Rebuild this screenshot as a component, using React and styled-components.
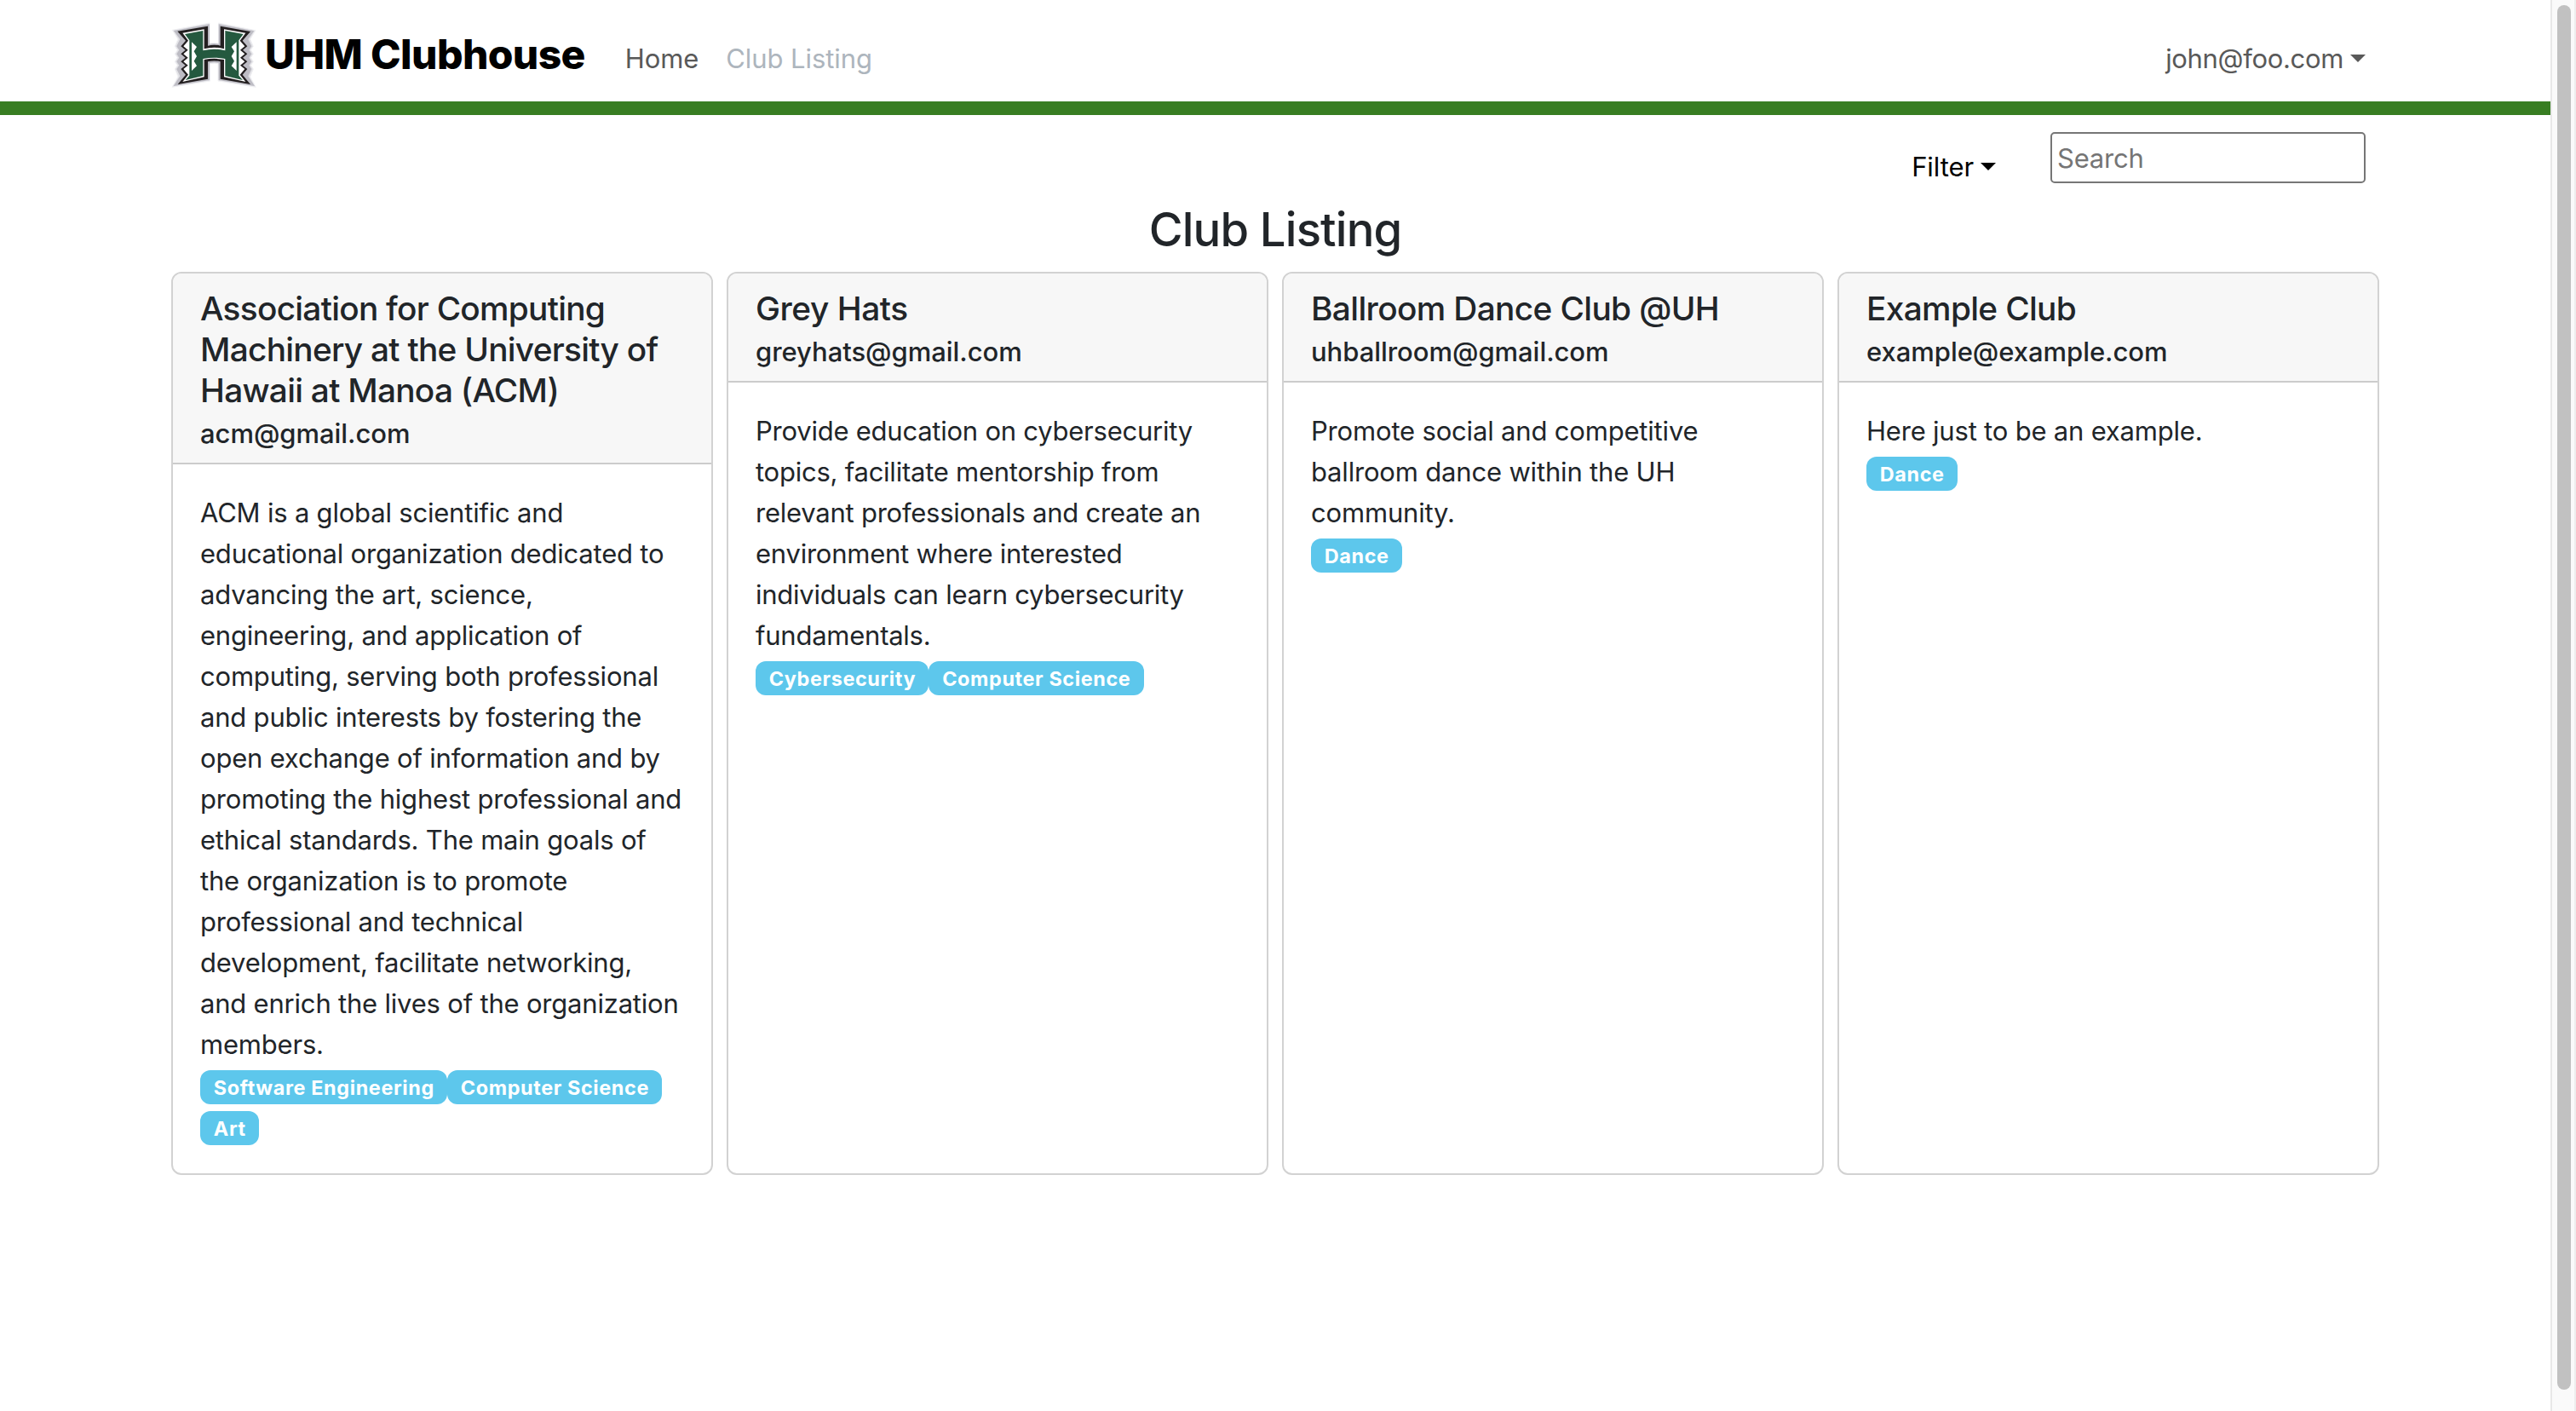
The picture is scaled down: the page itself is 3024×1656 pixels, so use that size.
import React from "react";
import styled, { createGlobalStyle } from "styled-components";

const GlobalStyle = createGlobalStyle`
  * { box-sizing: border-box; }
  body {
    margin: 0;
    overflow: hidden;
    background: #fff;
    color: #212529;
    font-family: Inter, "Liberation Sans", sans-serif;
    font-size: 31px;
    line-height: 48px;
    letter-spacing: -0.2px;
  }
`;

const Window = styled.div`
  display: flex;
  height: 1656px;
`;

const Page = styled.div`
  flex: 1;
  min-width: 0;
`;

const NavBar = styled.header`
  display: flex;
  align-items: flex-start;
  height: 135px;
  padding: 0 217px 0 201px;
  border-bottom: 16px solid #387d22;
`;

const Brand = styled.a`
  display: flex;
  align-items: flex-start;
  gap: 10px;
  padding-top: 26px;
  color: #000;
`;

const Logo = styled.svg`
  width: 100px;
  height: 77px;
`;

const BrandName = styled.span`
  padding-top: 14px;
  font-size: 48px;
  font-weight: 800;
  letter-spacing: -0.64px;
`;

const NavLinks = styled.nav`
  display: flex;
  gap: 32px;
  padding: 45px 0 0 47px;
`;

const NavLink = styled.a`
  color: ${(p) => (p.$active ? "#adb5bd" : "#595959")};
  letter-spacing: -0.08px;
`;

const Dropdown = styled.button`
  display: flex;
  align-items: center;
  gap: 8px;
  margin: ${(p) => p.$top}px 0 0;
  padding: 0;
  border: 0;
  background: none;
  color: ${(p) => p.$color};
  font: inherit;
  line-height: 48px;
  letter-spacing: ${(p) => p.$tracking}px;
`;

const AccountMenu = styled(Dropdown)`
  margin-left: auto;
`;

const Caret = styled.span`
  border-top: 9.6px solid currentColor;
  border-left: 9.6px solid transparent;
  border-right: 9.6px solid transparent;
`;

const Toolbar = styled.div`
  display: flex;
  justify-content: flex-end;
  align-items: flex-start;
  gap: 64px;
  height: 101px;
  padding: 20px 217px 0 0;
`;

const SearchBox = styled.input`
  width: 370px;
  height: 60px;
  padding: 2px 6px;
  border: 2px solid #767676;
  border-radius: 5px;
  background: #fff;
  font: inherit;
  letter-spacing: -0.2px;
  &::placeholder { color: #757575; opacity: 1; }
`;

const PageTitle = styled.h1`
  margin: 0 0 16px;
  font-size: 54.4px;
  font-weight: 500;
  line-height: 67px;
  letter-spacing: -0.84px;
  text-align: center;
`;

const CardGrid = styled.main`
  display: grid;
  grid-template-columns: repeat(4, 636px);
  gap: 16px;
  height: 1060px;
  padding-left: 201px;
`;

const Card = styled.article`
  border: 2px solid #d2d2d2;
  border-radius: 12px;
  overflow: hidden;
`;

const CardHeader = styled.div`
  padding: 17px 32px 15px;
  border-bottom: 2px solid #ccc;
  background: #f7f7f7;
`;

const ClubName = styled.h2`
  margin: 0;
  font-size: 38.8px;
  font-weight: 500;
  line-height: 48px;
  letter-spacing: ${(p) => p.$tracking}px;
`;

const ClubEmail = styled.div`
  padding-top: 7px;
  font-weight: 500;
  line-height: 39px;
  letter-spacing: -0.04px;
`;

const CardBody = styled.div`
  padding: 33px 32px 32px;
`;

const Description = styled.p`
  margin: 0;
  letter-spacing: ${(p) => p.$tracking}px;
`;

const DescriptionLine = styled.span`
  display: block;
  white-space: nowrap;
`;

const Badges = styled.div`
  display: flex;
  flex-wrap: wrap;
`;

const Badge = styled.span`
  height: 40px;
  margin: 6px 0 2px;
  padding: 0 15.2px 0 15.8px;
  border-radius: 12px;
  background: #5dc7ec;
  color: #fff;
  font-size: 23.4px;
  font-weight: 700;
  line-height: 41px;
  letter-spacing: 0.62px;
`;

const ScrollTrack = styled.div`
  flex: none;
  width: 30px;
  padding: 6px 0 0 6px;
  border-left: 2px solid #e8e8e8;
  border-right: 2px solid #ededed;
  background: #fafafa;
`;

const ScrollThumb = styled.div`
  width: 16px;
  height: 1625px;
  border-radius: 8px;
  background: #c1c1c1;
`;

const clubs = [
  {
    name: "Association for Computing Machinery at the University of Hawaii at Manoa (ACM)",
    nameTracking: -0.73,
    email: "acm@gmail.com",
    tracking: -0.2,
    lines: [
      "ACM is a global scientific and",
      "educational organization dedicated to",
      "advancing the art, science,",
      "engineering, and application of",
      "computing, serving both professional",
      "and public interests by fostering the",
      "open exchange of information and by",
      "promoting the highest professional and",
      "ethical standards. The main goals of",
      "the organization is to promote",
      "professional and technical",
      "development, facilitate networking,",
      "and enrich the lives of the organization",
      "members.",
    ],
    interests: ["Software Engineering", "Computer Science", "Art"],
  },
  {
    name: "Grey Hats",
    nameTracking: -0.45,
    email: "greyhats@gmail.com",
    tracking: -0.24,
    lines: [
      "Provide education on cybersecurity",
      "topics, facilitate mentorship from",
      "relevant professionals and create an",
      "environment where interested",
      "individuals can learn cybersecurity",
      "fundamentals.",
    ],
    interests: ["Cybersecurity", "Computer Science"],
  },
  {
    name: "Ballroom Dance Club @UH",
    nameTracking: -0.63,
    email: "uhballroom@gmail.com",
    tracking: -0.18,
    lines: ["Promote social and competitive", "ballroom dance within the UH", "community."],
    interests: ["Dance"],
  },
  {
    name: "Example Club",
    nameTracking: -0.65,
    email: "example@example.com",
    tracking: -0.2,
    lines: ["Here just to be an example."],
    interests: ["Dance"],
  },
];

function ClubLogo() {
  return (
    <Logo viewBox="33 48 300 231" aria-hidden="true">
      <path
        d="M37 76 L168 51 V123 Q184 120 200 123 V51 L330 77 L311 108 L322 133 L313 146 L322 160 L313 173 L322 187 L313 200 L322 213 L311 240 L331 277 L198 255 V194 Q184 191 170 194 V255 L36 277 L57 240 L46 213 L55 200 L46 187 L55 173 L46 160 L55 146 L46 133 L57 108 Z"
        fill="#e2e2e6"
        stroke="#f1f1f4"
        strokeWidth="3"
      />
      <path
        d="M42 78 L168 55 V125 Q184 121 200 125 V55 L325 79 L304 108 L316 133 L307 146 L316 160 L307 173 L316 187 L307 200 L316 213 L304 238 L327 273 L200 252 V192 Q184 188 168 192 V252 L41 273 L64 238 L52 213 L61 200 L52 187 L61 173 L52 160 L61 146 L52 133 L64 108 Z"
        fill="#bdbcc4"
      />
      <path
        d="M55 80 L162 62 V131 Q184 125 206 131 V62 L312 81 L284 113 L301 133 L285 146 L301 160 L285 173 L301 187 L285 200 L301 213 L284 233 L312 267 L206 248 V187 Q184 182 162 187 V248 L56 267 L84 233 L67 213 L83 200 L67 187 L83 173 L67 160 L83 146 L67 133 L84 113 Z"
        fill="#231f20"
      />
      <path
        d="M73 86 L149 73 V142 Q184 132 219 142 V73 L295 86 L275 113 L292 133 L276 146 L292 160 L276 173 L292 187 L276 200 L292 213 L275 233 L295 258 L219 241 V180 Q184 173 149 180 V241 L73 258 L93 233 L76 213 L92 200 L76 187 L92 173 L76 160 L92 146 L76 133 L93 113 Z"
        fill="#fff"
      />
      <path
        d="M81 90 L145 78 V148 Q184 138 223 148 V78 L287 90 L271 112 V236 L285 252 L223 237 V177 Q184 169 145 177 V237 L83 252 L97 236 V112 Z"
        fill="#24593f"
      />
      <path d="M105 118 L123 135 L113 151 L123 168 L113 185 L123 202 L105 219 Z" fill="#fff" />
      <path d="M263 118 L245 135 L255 151 L245 168 L255 185 L245 202 L263 219 Z" fill="#fff" />
    </Logo>
  );
}

function ClubCard({ club }) {
  return (
    <Card>
      <CardHeader>
        <ClubName $tracking={club.nameTracking}>{club.name}</ClubName>
        <ClubEmail>{club.email}</ClubEmail>
      </CardHeader>
      <CardBody>
        <Description $tracking={club.tracking}>
          {club.lines.map((line) => (
            <DescriptionLine key={line}>{line} </DescriptionLine>
          ))}
        </Description>
        <Badges>
          {club.interests.map((interest) => (
            <Badge key={interest}>{interest}</Badge>
          ))}
        </Badges>
      </CardBody>
    </Card>
  );
}

export default function App() {
  return (
    <>
      <GlobalStyle />
      <Window>
        <Page>
          <NavBar>
            <Brand>
              <ClubLogo />
              <BrandName>UHM Clubhouse</BrandName>
            </Brand>
            <NavLinks>
              <NavLink>Home</NavLink>
              <NavLink $active>Club Listing</NavLink>
            </NavLinks>
            <AccountMenu $top={44.5} $color="#595959" $tracking={-0.33}>
              john@foo.com
              <Caret />
            </AccountMenu>
          </NavBar>
          <Toolbar>
            <Dropdown $top={16.5} $color="#000" $tracking={-0.08}>
              Filter
              <Caret />
            </Dropdown>
            <SearchBox placeholder="Search" />
          </Toolbar>
          <PageTitle>Club Listing</PageTitle>
          <CardGrid>
            {clubs.map((club) => (
              <ClubCard key={club.email} club={club} />
            ))}
          </CardGrid>
        </Page>
        <ScrollTrack>
          <ScrollThumb />
        </ScrollTrack>
      </Window>
    </>
  );
}
